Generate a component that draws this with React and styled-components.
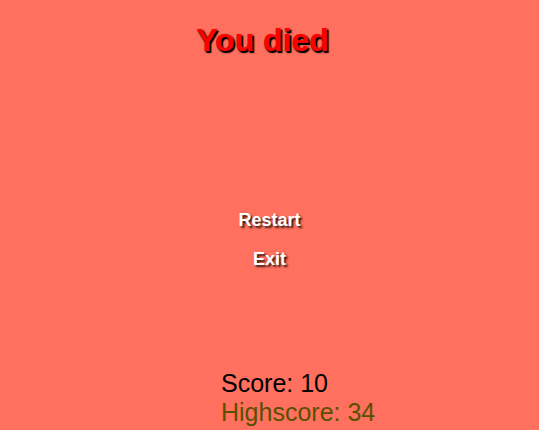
import React from "react";
import styled, { createGlobalStyle } from "styled-components";

const GlobalStyle = createGlobalStyle`
  html, body {
    margin: 0;
    padding: 0;
    background: #ff705e;
  }
  body {
    font-family: "Liberation Sans", Arial, sans-serif;
  }
`;

const Screen = styled.div`
  width: 539px;
  height: 430px;
  background: #ff705e;
  display: flex;
  flex-direction: column;
  align-items: center;
  overflow: hidden;
`;

const Title = styled.h1`
  margin: 22px 14px 0 0;
  font-size: 32px;
  font-weight: 700;
  line-height: 36px;
  color: #ff0000;
  text-shadow: 2px 2px 1px #000, 1px 1px 2px #000;
`;

const Menu = styled.div`
  margin-top: 152px;
  display: flex;
  flex-direction: column;
  align-items: center;
  gap: 19px;
`;

const MenuItem = styled.button`
  border: none;
  background: none;
  padding: 0;
  font-family: inherit;
  font-size: 18px;
  font-weight: 700;
  line-height: 20px;
  color: #fff;
  text-shadow: 2px 2px 2px #3a1a14;
  cursor: pointer;
`;

const Scores = styled.div`
  margin-top: auto;
  align-self: flex-start;
  padding: 0 0 3px 221px;
  display: flex;
  flex-direction: column;
`;

const ScoreLine = styled.div`
  font-size: 25px;
  line-height: 29px;
  color: ${(p) => p.color};
`;

export default function App() {
  return (
    <>
      <GlobalStyle />
      <Screen>
        <Title>You died</Title>
        <Menu>
          <MenuItem>Restart</MenuItem>
          <MenuItem>Exit</MenuItem>
        </Menu>
        <Scores>
          <ScoreLine color="#000">Score: 10</ScoreLine>
          <ScoreLine color="#5a5000">Highscore: 34</ScoreLine>
        </Scores>
      </Screen>
    </>
  );
}
